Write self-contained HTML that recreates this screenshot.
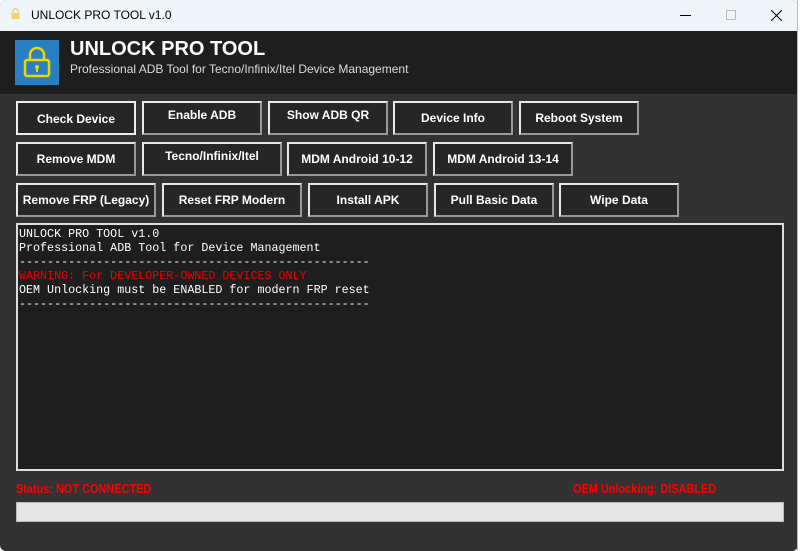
<!DOCTYPE html>
<html><head><style>
*{margin:0;padding:0;box-sizing:border-box}
body{width:800px;height:551px;background:#fff;font-family:"Liberation Sans",sans-serif;position:relative;overflow:hidden}
.win{position:absolute;left:0;top:0;width:798px;height:551px;background:#323232;border-radius:6px;overflow:hidden}
.tb{position:absolute;left:0;top:0;width:100%;height:31px;background:#eff4f9;font-size:12px;color:#000}
.hd{position:absolute;left:0;top:31px;width:100%;height:63px;background:#1e1e1e}
.b{position:absolute;height:34px;background:#262626;border:2px solid;border-color:#e8e8e8 #999 #999 #e8e8e8;color:#fff;font-weight:bold;font-size:12px;text-align:center;line-height:30px}
.t{line-height:24px}
.con{position:absolute;left:16px;top:223px;width:768px;height:248px;background:#1e1e1e;border:2px solid #ddd;font-family:"Liberation Mono",monospace;font-size:11.7px;color:#fff;line-height:14px;padding:2px 0 0 1px;white-space:pre}
.st{position:absolute;top:481px;color:#f00;font-weight:bold;font-size:13px;transform:scaleX(.84);transform-origin:left}
</style></head><body>
<div class="win">
<div class="tb">
<svg style="position:absolute;left:11px;top:8px" width="9" height="11" viewBox="0 0 9 11"><path d="M2 5V3a2.5 2.5 0 0 1 5 0v2" stroke="#e8c860" fill="none"/><rect x="0.5" y="5" width="8" height="6" fill="#f2d36b"/></svg>
<span style="position:absolute;left:31px;top:8px">UNLOCK PRO TOOL v1.0</span>
<div style="position:absolute;left:680px;top:15px;width:11px;height:1px;background:#000"></div>
<div style="position:absolute;left:726px;top:10px;width:10px;height:10px;border:1px solid #bbb"></div>
<svg style="position:absolute;left:771px;top:10px" width="11" height="11"><path d="M0 0L11 11M11 0L0 11" stroke="#000" stroke-width="1"/></svg>
</div>
<div class="hd">
<div style="position:absolute;left:15px;top:9px;width:44px;height:45px;background:#2a7fc0">
<svg width="44" height="44" viewBox="0 0 44 44"><path d="M15 20v-5a7 7 0 0 1 14 0v5" stroke="#f2d300" stroke-width="2.5" fill="none"/><rect x="10" y="20" width="24" height="16" rx="2" stroke="#f2d300" stroke-width="2.5" fill="none"/><circle cx="22" cy="27" r="2" fill="#f2d300"/><rect x="21" y="27" width="2" height="5" fill="#f2d300"/></svg>
</div>
<div style="position:absolute;left:70px;top:7px;color:#fff;font-weight:bold;font-size:20px">UNLOCK PRO TOOL</div>
<div style="position:absolute;left:70px;top:31px;color:#ddd;font-size:12px">Professional ADB Tool for Tecno/Infinix/Itel Device Management</div>
</div>
<div class="b" style="left:16px;top:101px;width:120px;border:2px solid #eee;line-height:32px">Check Device</div>
<div class="b t" style="left:142px;top:101px;width:120px">Enable ADB</div>
<div class="b t" style="left:268px;top:101px;width:120px">Show ADB QR</div>
<div class="b" style="left:393px;top:101px;width:120px">Device Info</div>
<div class="b" style="left:519px;top:101px;width:120px">Reboot System</div>
<div class="b" style="left:16px;top:142px;width:120px">Remove MDM</div>
<div class="b t" style="left:142px;top:142px;width:140px">Tecno/Infinix/Itel</div>
<div class="b" style="left:287px;top:142px;width:140px">MDM Android 10-12</div>
<div class="b" style="left:433px;top:142px;width:140px">MDM Android 13-14</div>
<div class="b" style="left:16px;top:183px;width:140px">Remove FRP (Legacy)</div>
<div class="b" style="left:162px;top:183px;width:140px">Reset FRP Modern</div>
<div class="b" style="left:308px;top:183px;width:120px">Install APK</div>
<div class="b" style="left:434px;top:183px;width:120px">Pull Basic Data</div>
<div class="b" style="left:559px;top:183px;width:120px">Wipe Data</div>
<div class="con">UNLOCK PRO TOOL v1.0
Professional ADB Tool for Device Management
--------------------------------------------------
<span style="color:#e00">WARNING: For DEVELOPER-OWNED DEVICES ONLY</span>
OEM Unlocking must be ENABLED for modern FRP reset
--------------------------------------------------</div>
<div class="st" style="left:16px">Status: NOT CONNECTED</div>
<div class="st" style="left:573px">OEM Unlocking: DISABLED</div>
<div style="position:absolute;left:16px;top:502px;width:768px;height:20px;background:#e6e6e6;border:1px solid #bbb"></div>
</div>
<div style="position:absolute;left:797px;top:0;width:3px;height:551px;background:#fff;border-left:1px solid #bbb"></div>
</body></html>
